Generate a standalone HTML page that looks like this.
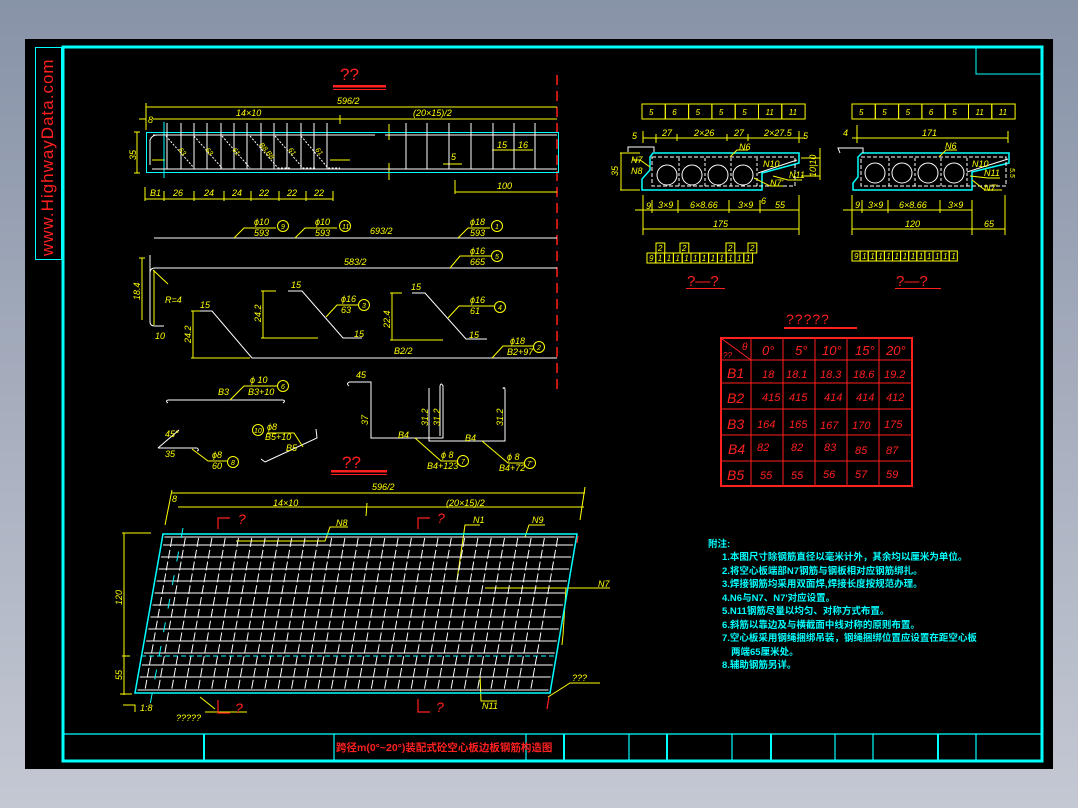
<!DOCTYPE html>
<html><head><meta charset="utf-8"><style>
html,body{margin:0;padding:0;width:1078px;height:808px;overflow:hidden;background:linear-gradient(#8893a8,#c4c8d3);}
svg{position:absolute;left:0;top:0}
text{font-family:"Liberation Sans",sans-serif;font-style:italic;}
.y{fill:#ffff00;font-size:9px}
.r{fill:#ff2020}
.c{fill:#00ffff;font-family:"Liberation Sans","Noto Sans CJK SC",sans-serif;font-style:normal;font-weight:bold;font-size:9.5px}
</style></head><body>
<svg width="1078" height="808" viewBox="0 0 1078 808">
<rect x="25" y="39" width="1028" height="730" fill="#000"/>
<!-- frame -->
<rect x="63" y="47" width="979" height="714" fill="none" stroke="#00ffff" stroke-width="3"/>
<rect x="35.5" y="47.5" width="26" height="212" fill="none" stroke="#00ffff"/>
<text transform="translate(53,256) rotate(-90)" fill="#ff2020" style="font-style:normal;font-size:17px;letter-spacing:1px">www.HighwayData.com</text>
<polyline points="976,47 976,74 1042,74" fill="none" stroke="#00ffff"/>
<!-- title bar -->
<g stroke="#00ffff" stroke-width="1.2">
<line x1="63" y1="734" x2="1042" y2="734"/>
<line x1="204" y1="734" x2="204" y2="761" stroke-width="2"/>
<line x1="334" y1="734" x2="334" y2="761"/>
<line x1="526" y1="734" x2="526" y2="761"/>
<line x1="564" y1="734" x2="564" y2="761" stroke-width="2"/>
<line x1="629" y1="734" x2="629" y2="761"/>
<line x1="667" y1="734" x2="667" y2="761" stroke-width="2"/>
<line x1="732" y1="734" x2="732" y2="761"/>
<line x1="771" y1="734" x2="771" y2="761" stroke-width="2"/>
<line x1="835" y1="734" x2="835" y2="761"/>
<line x1="873" y1="734" x2="873" y2="761"/>
<line x1="938" y1="734" x2="938" y2="761" stroke-width="2"/>
<line x1="976" y1="734" x2="976" y2="761"/>
</g>
<text x="336" y="751" fill="#ff2020" style="font-family:'Liberation Sans','Noto Sans CJK SC',sans-serif;font-style:normal;font-weight:bold;font-size:10.5px">跨径m(0°~20°)装配式砼空心板边板钢筋构造图</text>

<!-- ============ TOP ELEVATION ============ -->
<text x="340" y="80" class="r" style="font-size:17px;font-style:normal">??</text>
<rect x="333" y="85" width="53" height="2.5" fill="#ff2020"/><line x1="333" y1="89.5" x2="386" y2="89.5" stroke="#ff2020"/>
<line x1="557" y1="75" x2="557" y2="392" stroke="#ff2020" stroke-width="1.5" stroke-dasharray="10 6"/>
<g stroke="#ffff00" fill="none">
<line x1="146" y1="107" x2="557" y2="107"/><line x1="146" y1="103" x2="146" y2="130"/>
<line x1="153" y1="119" x2="557" y2="119"/><line x1="340" y1="115" x2="340" y2="124"/>
<line x1="139" y1="119" x2="146" y2="119"/>
<line x1="137" y1="132" x2="137" y2="173"/><line x1="134" y1="132" x2="140" y2="132"/><line x1="134" y1="173" x2="140" y2="173"/>
<line x1="145" y1="199" x2="333" y2="199"/>
<line x1="145" y1="187" x2="145" y2="201"/><line x1="164" y1="191" x2="164" y2="201"/><line x1="194" y1="191" x2="194" y2="201"/><line x1="224" y1="191" x2="224" y2="201"/><line x1="251" y1="191" x2="251" y2="201"/><line x1="279" y1="191" x2="279" y2="201"/><line x1="306" y1="191" x2="306" y2="201"/><line x1="333" y1="191" x2="333" y2="201"/>
<line x1="455" y1="192" x2="557" y2="192"/><line x1="455" y1="180" x2="455" y2="194"/>
<line x1="492" y1="150" x2="533" y2="150"/>
<line x1="152" y1="160" x2="165" y2="160"/><line x1="330" y1="160" x2="350" y2="160"/><line x1="443" y1="164" x2="462" y2="164"/>
<line x1="389" y1="124" x2="389" y2="140"/><line x1="389" y1="163" x2="389" y2="180"/>
</g>
<text class="y" x="337" y="104">596/2</text>
<text class="y" x="236" y="116">14×10</text>
<text class="y" x="413" y="116">(20×15)/2</text>
<text class="y" x="148" y="123">8</text>
<text class="y" transform="translate(136,160) rotate(-90)">35</text>
<text class="y" x="150" y="196">B1</text><text class="y" x="173" y="196">26</text><text class="y" x="204" y="196">24</text><text class="y" x="232" y="196">24</text><text class="y" x="259" y="196">22</text><text class="y" x="287" y="196">22</text><text class="y" x="314" y="196">22</text>
<text class="y" x="497" y="189">100</text>
<text class="y" x="497" y="148">15</text><text class="y" x="518" y="148">16</text>
<text class="y" x="451" y="160">5</text>
<rect x="146.5" y="132.5" width="412" height="40" fill="none" stroke="#00ffff"/>
<line x1="164" y1="122" x2="164" y2="178" stroke="#00ffff"/>
<g stroke="#fff" fill="none">
<line x1="153" y1="135" x2="375" y2="135"/><line x1="385" y1="135" x2="557" y2="135"/>
<line x1="152" y1="169" x2="557" y2="169"/>
<path d="M150,165 L150,140 Q152,135 157,135"/>
</g>
<g stroke="#fff" id="vbars"></g>
<g stroke="#fff" stroke-dasharray="2 1.5" fill="none">
<path d="M166,136 L194,168"/><path d="M194,136 L222,168"/><path d="M222,136 L250,168"/><path d="M250,136 L278,168 L290,168"/><path d="M275,136 L303,168 L316,168"/><path d="M301,136 L328,168 L340,168"/>
</g>
<text class="y" transform="translate(178,150) rotate(50)" style="font-size:7px">63</text>
<text class="y" transform="translate(205,150) rotate(50)" style="font-size:7px">63</text>
<text class="y" transform="translate(232,150) rotate(50)" style="font-size:7px">61</text>
<text class="y" transform="translate(259,145) rotate(50)" style="font-size:7px">B8,B8</text>
<text class="y" transform="translate(288,150) rotate(50)" style="font-size:7px">61</text>
<text class="y" transform="translate(315,150) rotate(50)" style="font-size:7px">61</text>

<!-- bars -->
<g stroke="#fff" fill="none">
<line x1="154" y1="238" x2="557" y2="238"/>
<line x1="154" y1="268" x2="557" y2="268"/>
<path d="M150,255 L150,322 Q150,326 155,326 L164,326"/>
<path d="M155,268 Q150,268 150,273"/>
<path d="M192,311 L212,311 L252,358 L557,358" stroke-dasharray="0"/>
<path d="M288,291 L302,291 L343,338 L362,338"/>
<path d="M412,293 L425,293 L466,339 L487,339"/>
<path d="M168,400 L283,400 M168,400 q-3,1 0,3 M283,400 q3,1 0,3"/>
<path d="M158,448 L197,448 q3,2 0,3 M158,448 L179,430"/>
<path d="M265,462 L317,438 L316,429 M265,462 l-4,-3"/>
<path d="M349,382 L371,382 L371,438 L443,438 L443,386 q-2,-4 -3,0 L440,436 M349,382 q-3,2 0,4"/>
<path d="M429,388 L429,441 L505,441 L505,389 q-1,-3 -2,0"/>
</g>
<g stroke="#ffff00" fill="none">
<path d="M234,238 L244,228 L276,228"/><path d="M295,238 L305,228 L337,228"/><path d="M458,238 L468,228 L490,228"/>
<path d="M450,268 L460,256 L491,256"/>
<path d="M154,270 L154,325"/><path d="M142,258 L142,320 M139,258 L145,258"/>
<line x1="193" y1="311" x2="193" y2="358"/><line x1="191" y1="311" x2="200" y2="311"/><line x1="191" y1="358" x2="250" y2="358"/>
<line x1="263" y1="291" x2="263" y2="338"/><line x1="261" y1="291" x2="276" y2="291"/><line x1="261" y1="338" x2="318" y2="338"/>
<line x1="392" y1="293" x2="392" y2="340"/><line x1="390" y1="293" x2="402" y2="293"/><line x1="390" y1="340" x2="443" y2="340"/>
<path d="M326,317 L337,305 L358,305"/><path d="M448,318 L459,306 L494,306"/>
<path d="M492,358 L503,346 L533,346"/>
<path d="M230,400 L244,386 L278,386"/>
<path d="M192,449 L208,461 L228,461"/>
<path d="M303,447 L294,433 L267,433"/>
<path d="M415,438 L441,461 L457,461"/>
<path d="M482,441 L508,463 L524,463"/>
<path d="M153,270 L168,284"/>
</g>
<g fill="none" stroke="#ffff00">
<circle cx="283" cy="226" r="5.5"/><circle cx="345" cy="226" r="5.5"/><circle cx="497" cy="226" r="5.5"/>
<circle cx="497" cy="256" r="5.5"/><circle cx="364" cy="305" r="5.5"/><circle cx="500" cy="307" r="5.5"/>
<circle cx="539" cy="347" r="5.5"/><circle cx="283" cy="386" r="5.5"/><circle cx="233" cy="462" r="5.5"/>
<circle cx="258" cy="430" r="5.5"/><circle cx="463" cy="461" r="5.5"/><circle cx="530" cy="463" r="5.5"/>
</g>
<g class="y" style="font-size:7px;font-style:normal">
<text x="281" y="229">9</text><text x="342" y="229">11</text><text x="495" y="229">1</text><text x="495" y="259">5</text><text x="362" y="308">3</text><text x="498" y="310">4</text><text x="537" y="350">2</text><text x="281" y="389">6</text><text x="231" y="465">8</text><text x="254" y="433">10</text><text x="461" y="464">7</text><text x="527" y="466">7'</text>
</g>
<text class="y" x="254" y="225">ϕ10</text><text class="y" x="254" y="236">593</text>
<text class="y" x="315" y="225">ϕ10</text><text class="y" x="315" y="236">593</text>
<text class="y" x="370" y="234">693/2</text>
<text class="y" x="470" y="225">ϕ18</text><text class="y" x="470" y="236">593</text>
<text class="y" x="344" y="265">583/2</text>
<text class="y" x="470" y="254">ϕ16</text><text class="y" x="470" y="265">665</text>
<text class="y" x="165" y="303">R=4</text>
<text class="y" transform="translate(140,300) rotate(-90)">18.4</text>
<text class="y" x="155" y="339">10</text>
<text class="y" x="200" y="308">15</text><text class="y" transform="translate(191,343) rotate(-90)">24.2</text>
<text class="y" x="291" y="288">15</text><text class="y" transform="translate(261,322) rotate(-90)">24.2</text><text class="y" x="354" y="337">15</text>
<text class="y" x="341" y="302">ϕ16</text><text class="y" x="341" y="313">63</text>
<text class="y" x="411" y="290">15</text><text class="y" transform="translate(390,328) rotate(-90)">22.4</text><text class="y" x="469" y="338">15</text>
<text class="y" x="470" y="303">ϕ16</text><text class="y" x="470" y="314">61</text>
<text class="y" x="394" y="354">B2/2</text>
<text class="y" x="510" y="344">ϕ18</text><text class="y" x="507" y="355">B2+97</text>
<text class="y" x="218" y="395">B3</text>
<text class="y" x="250" y="383">ϕ 10</text><text class="y" x="248" y="395">B3+10</text>
<text class="y" x="165" y="437">45°</text><text class="y" x="165" y="457">35</text>
<text class="y" x="212" y="458">ϕ8</text><text class="y" x="212" y="469">60</text>
<text class="y" x="267" y="430">ϕ8</text><text class="y" x="265" y="440">B5+10</text>
<text class="y" x="286" y="451">B5</text>
<text class="y" x="356" y="378">45</text>
<text class="y" transform="translate(368,425) rotate(-90)">37</text>
<text class="y" transform="translate(428,426) rotate(-90)">31.2</text>
<text class="y" transform="translate(440,426) rotate(-90)">31.2</text>
<text class="y" transform="translate(503,426) rotate(-90)">31.2</text>
<text class="y" x="398" y="438">B4</text><text class="y" x="465" y="441">B4</text>
<text class="y" x="441" y="458">ϕ 8</text><text class="y" x="427" y="469">B4+123</text>
<text class="y" x="507" y="460">ϕ 8</text><text class="y" x="499" y="471">B4+72</text>
<text x="342" y="468" class="r" style="font-size:17px;font-style:normal">??</text>
<rect x="331" y="470" width="56" height="2.5" fill="#ff2020"/><line x1="331" y1="474.5" x2="387" y2="474.5" stroke="#ff2020"/>

<!-- ============ CROSS SECTIONS ============ -->
<g id="secs"></g>
<polygon points="653,153 799,153 799,163 762,173 762,190 642,190 642,179 650,170 650,157" fill="none" stroke="#00ffff" stroke-width="1.5"/>
<polygon points="862,153 1009,153 1009,163 972,172 972,190 853,190 853,183 858,177 858,157" fill="none" stroke="#00ffff" stroke-width="1.5"/>
<rect x="652" y="157" width="143" height="29" fill="none" stroke="#fff" stroke-dasharray="4 2"/>
<rect x="861" y="157" width="145" height="29" fill="none" stroke="#fff" stroke-dasharray="4 2"/>
<g stroke="#fff" fill="none">
<circle cx="667" cy="175" r="10"/><circle cx="692" cy="175" r="10"/><circle cx="718" cy="175" r="10"/><circle cx="743" cy="175" r="10"/>
<circle cx="875" cy="173" r="10"/><circle cx="902" cy="173" r="10"/><circle cx="928" cy="173" r="10"/><circle cx="954" cy="173" r="10"/>
<line x1="679" y1="158" x2="679" y2="186" stroke-dasharray="3 2"/><line x1="705" y1="158" x2="705" y2="186" stroke-dasharray="3 2"/><line x1="731" y1="158" x2="731" y2="186" stroke-dasharray="3 2"/><line x1="757" y1="158" x2="757" y2="186" stroke-dasharray="3 2"/>
<line x1="889" y1="158" x2="889" y2="186" stroke-dasharray="3 2"/><line x1="915" y1="158" x2="915" y2="186" stroke-dasharray="3 2"/><line x1="941" y1="158" x2="941" y2="186" stroke-dasharray="3 2"/><line x1="967" y1="158" x2="967" y2="186" stroke-dasharray="3 2"/>
<polyline points="628,152 628,147 654,147 654,152"/><polyline points="840,153 838,148 863,148 863,153"/>
<line x1="758" y1="173" x2="797" y2="160"/><line x1="967" y1="172" x2="1008" y2="159"/>
</g>
<g stroke="#ffff00" fill="none">
<line x1="620" y1="153" x2="640" y2="153"/><line x1="620" y1="190" x2="640" y2="190"/><line x1="621" y1="153" x2="621" y2="190"/>
<line x1="643" y1="138" x2="805" y2="138"/><line x1="643" y1="131" x2="643" y2="143"/><line x1="656" y1="134" x2="656" y2="143"/><line x1="677" y1="134" x2="677" y2="141"/><line x1="727" y1="134" x2="727" y2="141"/><line x1="748" y1="134" x2="748" y2="141"/><line x1="799" y1="131" x2="799" y2="143"/>
<line x1="643" y1="210" x2="799" y2="210"/><line x1="643" y1="195" x2="643" y2="235"/><line x1="652" y1="200" x2="652" y2="213"/><line x1="678" y1="200" x2="678" y2="213"/><line x1="729" y1="200" x2="729" y2="213"/><line x1="760" y1="200" x2="760" y2="213"/><line x1="799" y1="195" x2="799" y2="235"/>
<line x1="643" y1="229" x2="799" y2="229"/><line x1="635" y1="210" x2="643" y2="210"/>
<line x1="852" y1="138" x2="1008" y2="138"/><line x1="857" y1="125" x2="857" y2="143"/><line x1="1008" y1="131" x2="1008" y2="143"/>
<line x1="852" y1="210" x2="972" y2="210"/><line x1="852" y1="195" x2="852" y2="235"/><line x1="862" y1="200" x2="862" y2="213"/><line x1="888" y1="200" x2="888" y2="213"/><line x1="940" y1="200" x2="940" y2="213"/><line x1="972" y1="200" x2="972" y2="235"/><line x1="1005" y1="195" x2="1005" y2="235"/>
<line x1="852" y1="229" x2="1005" y2="229"/><line x1="843" y1="210" x2="852" y2="210"/>
<line x1="801" y1="158" x2="820" y2="158"/><line x1="801" y1="176" x2="820" y2="176"/><line x1="820" y1="148" x2="820" y2="180"/>
<path d="M730,157 L737,150 L748,150"/><path d="M939,157 L946,150 L957,150"/>
<path d="M650,167 L640,160 L632,160"/><path d="M754,178 L770,186 L783,186"/><path d="M773,176 L788,180 L802,180"/>
<path d="M972,180 L985,190 L1002,190"/><path d="M970,176 L988,178 L1000,178"/>
</g>
<text class="y" x="632" y="139">5</text><text class="y" x="662" y="136">27</text><text class="y" x="694" y="136">2×26</text><text class="y" x="734" y="136">27</text><text class="y" x="764" y="136">2×27.5</text><text class="y" x="803" y="139">5</text>
<text class="y" transform="translate(618,176) rotate(-90)">35</text>
<text class="y" x="739" y="150">N6</text><text class="y" x="631" y="163">N7</text><text class="y" x="631" y="174">N8</text>
<text class="y" x="763" y="167">N10</text><text class="y" x="789" y="178">N11</text><text class="y" x="770" y="186">N7'</text>
<text class="y" transform="translate(816,177) rotate(-90)">10|10</text>
<text class="y" x="646" y="209">9</text><text class="y" x="658" y="208">3×9</text><text class="y" x="690" y="208">6×8.66</text><text class="y" x="738" y="208">3×9</text><text class="y" x="761" y="204">6</text><text class="y" x="775" y="208">55</text>
<text class="y" x="713" y="227">175</text>
<text class="y" x="843" y="136">4</text><text class="y" x="922" y="136">171</text>
<text class="y" x="945" y="149">N6</text><text class="y" x="972" y="167">N10</text><text class="y" x="984" y="176">N11</text><text class="y" x="984" y="191">N7'</text>
<text class="y" transform="translate(1010,168) rotate(90)" style="font-size:7px">5.5</text>
<text class="y" x="855" y="208">9</text><text class="y" x="868" y="208">3×9</text><text class="y" x="899" y="208">6×8.66</text><text class="y" x="948" y="208">3×9</text>
<text class="y" x="905" y="227">120</text><text class="y" x="984" y="227">65</text>
<text x="687" y="286" class="r" style="font-size:15px;font-style:normal">?—?</text>
<line x1="686" y1="288.5" x2="725" y2="288.5" stroke="#ff2020"/>
<text x="896" y="286" class="r" style="font-size:15px;font-style:normal">?—?</text>
<line x1="895" y1="288.5" x2="941" y2="288.5" stroke="#ff2020"/>

<!-- ============ TABLE ============ -->
<text x="786" y="324" class="r" style="font-size:14px;font-style:normal;letter-spacing:1px">?????</text>
<line x1="784" y1="328" x2="857" y2="328" stroke="#ff2020" stroke-width="2"/>
<rect x="721" y="338" width="191" height="148" fill="none" stroke="#ff2020" stroke-width="2"/>
<g stroke="#ff2020">
<line x1="751" y1="338" x2="751" y2="486"/><line x1="783" y1="338" x2="783" y2="486"/><line x1="815" y1="338" x2="815" y2="486"/><line x1="847" y1="338" x2="847" y2="486"/><line x1="879" y1="338" x2="879" y2="486"/>
<line x1="721" y1="360" x2="912" y2="360"/><line x1="721" y1="383" x2="912" y2="383"/><line x1="721" y1="409" x2="912" y2="409"/><line x1="721" y1="435" x2="912" y2="435"/><line x1="721" y1="461" x2="912" y2="461"/>
<line x1="722" y1="339" x2="751" y2="360"/>
</g>
<g class="r" style="font-size:11px">
<text x="742" y="350" style="font-size:10px">θ</text><text x="723" y="358" style="font-size:8px">??</text>
<text x="762" y="355" style="font-size:13px">0°</text><text x="795" y="355" style="font-size:13px">5°</text><text x="822" y="355" style="font-size:13px">10°</text><text x="855" y="355" style="font-size:13px">15°</text><text x="886" y="355" style="font-size:13px">20°</text>
<text x="727" y="378" style="font-size:14px">B1</text><text x="762" y="378">18</text><text x="786" y="378">18.1</text><text x="820" y="378">18.3</text><text x="853" y="378">18.6</text><text x="884" y="378">19.2</text>
<text x="727" y="403" style="font-size:14px">B2</text><text x="762" y="401">415</text><text x="789" y="401">415</text><text x="824" y="401">414</text><text x="856" y="401">414</text><text x="886" y="401">412</text>
<text x="727" y="429" style="font-size:14px">B3</text><text x="757" y="428">164</text><text x="789" y="428">165</text><text x="820" y="429">167</text><text x="852" y="429">170</text><text x="884" y="428">175</text>
<text x="728" y="454" style="font-size:14px">B4</text><text x="757" y="451">82</text><text x="791" y="451">82</text><text x="824" y="451">83</text><text x="855" y="454">85</text><text x="886" y="454">87</text>
<text x="727" y="480" style="font-size:14px">B5</text><text x="760" y="479">55</text><text x="791" y="479">55</text><text x="823" y="478">56</text><text x="855" y="478">57</text><text x="886" y="478">59</text>
</g>

<!-- ============ NOTES ============ -->
<text class="c" x="708" y="547">附注:</text>
<text class="c" x="722" y="560">1.本图尺寸除钢筋直径以毫米计外，其余均以厘米为单位。</text>
<text class="c" x="722" y="574">2.将空心板端部N7钢筋与钢板相对应钢筋绑扎。</text>
<text class="c" x="722" y="587">3.焊接钢筋均采用双面焊,焊接长度按规范办理。</text>
<text class="c" x="722" y="601">4.N6与N7、N7'对应设置。</text>
<text class="c" x="722" y="614">5.N11钢筋尽量以均匀、对称方式布置。</text>
<text class="c" x="722" y="628">6.斜筋以靠边及与横截面中线对称的原则布置。</text>
<text class="c" x="722" y="641">7.空心板采用钢绳捆绑吊装，钢绳捆绑位置应设置在距空心板</text>
<text class="c" x="731" y="655">两端65厘米处。</text>
<text class="c" x="722" y="668">8.辅助钢筋另详。</text>

<!-- ============ PLAN ============ -->
<g stroke="#ffff00" fill="none">
<line x1="172" y1="493" x2="585" y2="493"/><line x1="172" y1="490" x2="165" y2="525"/><line x1="585" y1="487" x2="580" y2="520"/>
<line x1="178" y1="507" x2="584" y2="507"/><line x1="367" y1="503" x2="366" y2="516"/>
<line x1="122" y1="533" x2="151" y2="533"/><line x1="124" y1="533" x2="124" y2="695"/><line x1="122" y1="656" x2="130" y2="656"/><line x1="120" y1="694" x2="132" y2="694"/>
<path d="M236,541 L325,541 L330,527 L348,527"/><path d="M457,580 L465,525 L480,525"/><path d="M525,537 L529,525 L545,525"/><path d="M485,588 L565,588 L610,588"/>
<path d="M560,588 L566,588 L563,635 L562,645"/>
<path d="M480,675 L481,701 L497,701"/><path d="M548,697 L570,683 L600,683"/>
<path d="M123,705 L135,705 L135,712"/><path d="M215,709 L200,697"/><path d="M205,712 L247,712"/>
</g>
<text class="y" x="372" y="490">596/2</text><text class="y" x="172" y="502">8</text>
<text class="y" x="273" y="506">14×10</text><text class="y" x="446" y="506">(20×15)/2</text>
<text class="y" x="336" y="526">N8</text><text class="y" x="473" y="523">N1</text><text class="y" x="532" y="523">N9</text><text class="y" x="598" y="587">N7</text>
<text class="y" x="482" y="709">N11</text><text class="y" x="572" y="681">???</text><text class="y" x="176" y="721">?????</text>
<text class="y" transform="translate(122,605) rotate(-90)">120</text><text class="y" transform="translate(122,680) rotate(-90)">55</text>
<text class="y" x="140" y="711">1:8</text>
<g stroke="#ff2020" fill="none" stroke-width="1.2">
<path d="M218,529 L218,518 L230,518"/><path d="M418,529 L418,518 L430,518"/>
<path d="M218,700 L218,713 L230,713"/><path d="M418,699 L418,712 L430,712"/>
<line x1="578" y1="536" x2="577" y2="543"/><line x1="549" y1="697" x2="547" y2="709"/>
</g>
<g class="r" style="font-size:14px;font-style:normal"><text x="238" y="524">?</text><text x="437" y="523">?</text><text x="235" y="713">?</text><text x="436" y="712">?</text></g>
<g id="plan"></g>
<polygon points="163,534 577,534 550,693 135,693" fill="none" stroke="#00ffff" stroke-width="1.5"/>
<line x1="141" y1="656" x2="557" y2="656" stroke="#00ffff" stroke-dasharray="5 3"/>
<line x1="183" y1="528" x2="150" y2="705" stroke="#00ffff" stroke-dasharray="10 14"/>
</svg>
<script>
var NS="http://www.w3.org/2000/svg";
function L(g,x1,y1,x2,y2,a){var l=document.createElementNS(NS,"line");l.setAttribute("x1",x1);l.setAttribute("y1",y1);l.setAttribute("x2",x2);l.setAttribute("y2",y2);for(var k in (a||{}))l.setAttribute(k,a[k]);g.appendChild(l);}
function R(g,x,y,w,h){var r=document.createElementNS(NS,"rect");r.setAttribute("x",x);r.setAttribute("y",y);r.setAttribute("width",w);r.setAttribute("height",h);r.setAttribute("fill","none");r.setAttribute("stroke","#ffff00");g.appendChild(r);}
function T(g,x,y,s){var t=document.createElementNS(NS,"text");t.setAttribute("x",x);t.setAttribute("y",y);t.setAttribute("class","y");t.setAttribute("style","font-size:8px");t.textContent=s;g.appendChild(t);}
var vb=document.getElementById("vbars");
[167,181,194,207,221,234,247,261,274,287,301,314,327,406,427,449,471,493,514,535].forEach(function(x){L(vb,x,123,x,169);});
var s=document.getElementById("secs");
var v1=["5","6","5","5","5","11","11"],v2=["5","5","5","6","5","11","11"];
for(var i=0;i<7;i++){R(s,642+i*23.3,104,23.3,15);T(s,649+i*23.3,115,v1[i]);R(s,852+i*23.3,104,23.3,15);T(s,859+i*23.3,115,v2[i]);}
for(var i=0;i<12;i++){R(s,647+i*8.8,253,8.8,10);T(s,649+i*8.8,261,i==0?"9":"1");}
[656,680,726,748].forEach(function(x){R(s,x,243,8.8,10);T(s,x+2,251,"2");});
for(var i=0;i<13;i++){R(s,852+i*8.1,251,8.1,10);T(s,854+i*8.1,259,i==0?"9":"1");}
var p=document.getElementById("plan");
[537,545,557,569,581,593,605,617,629,641,653,665,677,690].forEach(function(y){var f=(y-534)/159;L(p,165-f*28,y,575-f*27,y,{stroke:"#fff"});});
for(var x=172;x<570;x+=13.3){L(p,x,538,x-27,690,{stroke:"#fff","stroke-dasharray":"9 3"});}
</script>
</body></html>
